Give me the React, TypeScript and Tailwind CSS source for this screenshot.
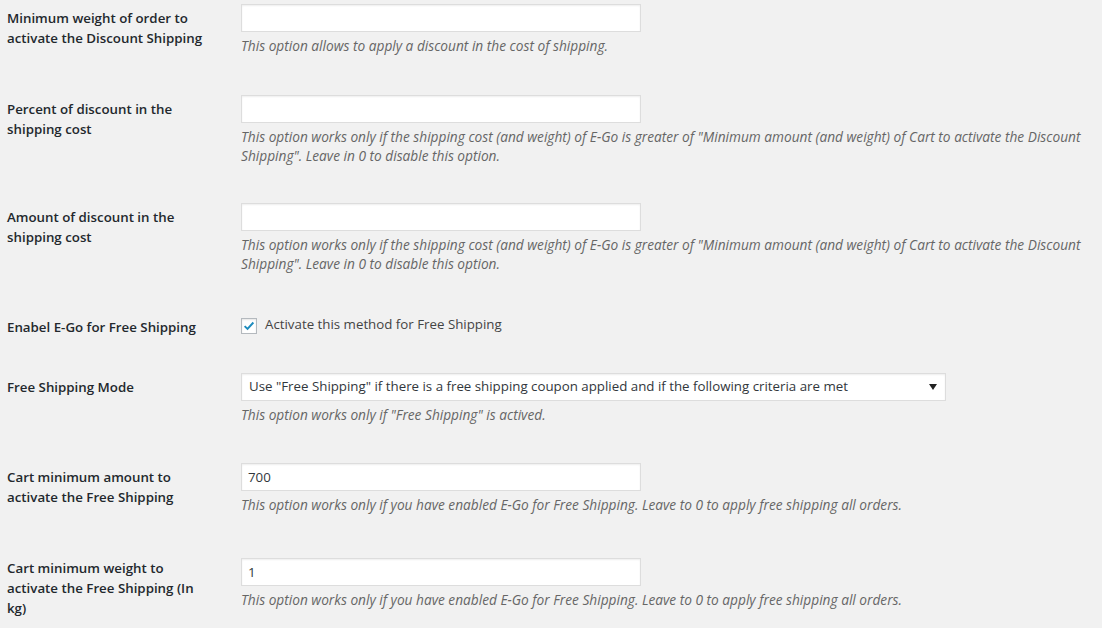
const font = { fontFamily: '"Open Sans", "Noto Sans", sans-serif' }

interface RowProps {
  label: string[]
  children: React.ReactNode
  gap: string
  pad?: string
}

function Row({ label, children, gap, pad = 'pt-[4px]' }: RowProps) {
  return (
    <div className={`flex items-start ${gap}`}>
      <div className={`w-[234px] shrink-0 ${pad} text-[13.3px] font-semibold leading-[20px] text-[#23282d]`}>
        {label.map((l) => (
          <div key={l}>{l}</div>
        ))}
      </div>
      <div className="flex-1">{children}</div>
    </div>
  )
}

function TextInput({ value = '' }: { value?: string }) {
  return (
    <input
      type="text"
      defaultValue={value}
      className="block h-[28px] w-[400px] border border-[#ddd] bg-white px-[6px] text-[13.3px] text-[#32373c] shadow-[inset_0_1px_2px_rgba(0,0,0,0.07)] outline-none"
    />
  )
}

function Desc({ lines }: { lines: string[] }) {
  return (
    <p className="mt-[4px] text-[13.7px] italic leading-[19px] text-[#666]">
      {lines.map((l) => (
        <span key={l} className="block whitespace-nowrap">
          {l}
        </span>
      ))}
    </p>
  )
}

const greater = [
  'This option works only if the shipping cost (and weight) of E-Go is greater of "Minimum amount (and weight) of Cart to activate the Discount',
  'Shipping". Leave in 0 to disable this option.',
]

const enabled = [
  'This option works only if you have enabled E-Go for Free Shipping. Leave to 0 to apply free shipping all orders.',
]

export default function App() {
  return (
    <div style={font} className="h-[628px] w-[1102px] overflow-hidden bg-[#f1f1f1] pl-[7px] pt-[4px]">
      <Row label={['Minimum weight of order to', 'activate the Discount Shipping']} gap="mb-[40px]">
        <TextInput />
        <Desc lines={['This option allows to apply a discount in the cost of shipping.']} />
      </Row>

      <Row label={['Percent of discount in the', 'shipping cost']} gap="mb-[38px]">
        <TextInput />
        <Desc lines={greater} />
      </Row>

      <Row label={['Amount of discount in the', 'shipping cost']} gap="mb-[40px]">
        <TextInput />
        <Desc lines={greater} />
      </Row>

      <Row label={['Enabel E-Go for Free Shipping']} gap="mb-[36px]">
        <label className="flex h-[24px] items-center gap-[8px] text-[13.3px] text-[#444]">
          <span className="mt-[1px] flex h-[16px] w-[16px] items-center justify-center border border-[#b4b9be] bg-white shadow-[inset_0_1px_2px_rgba(0,0,0,0.1)]">
            <svg viewBox="0 0 16 16" className="h-[14px] w-[14px]">
              <path d="M3 8.2 L6.3 11.4 L13 4" fill="none" stroke="#1e8cbe" strokeWidth="2.2" />
            </svg>
          </span>
          Activate this method for Free Shipping
        </label>
      </Row>

      <Row label={['Free Shipping Mode']} gap="mb-[39px]">
        <div className="flex h-[28px] w-[705px] items-center justify-between border border-[#ddd] bg-white pl-[7px] pr-[8px] text-[13.3px] text-[#32373c] shadow-[inset_0_1px_2px_rgba(0,0,0,0.07)]">
          <span>Use "Free Shipping" if there is a free shipping coupon applied and if the following criteria are met</span>
          <svg viewBox="0 0 8 6" className="h-[6px] w-[8px]">
            <path d="M0 0 H8 L4 6 Z" fill="#222" />
          </svg>
        </div>
        <Desc lines={['This option works only if "Free Shipping" is actived.']} />
      </Row>

      <Row label={['Cart minimum amount to', 'activate the Free Shipping']} gap="mb-[44px]">
        <TextInput value="700" />
        <Desc lines={enabled} />
      </Row>

      <Row label={['Cart minimum weight to', 'activate the Free Shipping (In', 'kg)']} gap="mb-0" pad="pt-0">
        <TextInput value="1" />
        <Desc lines={enabled} />
      </Row>
    </div>
  )
}
